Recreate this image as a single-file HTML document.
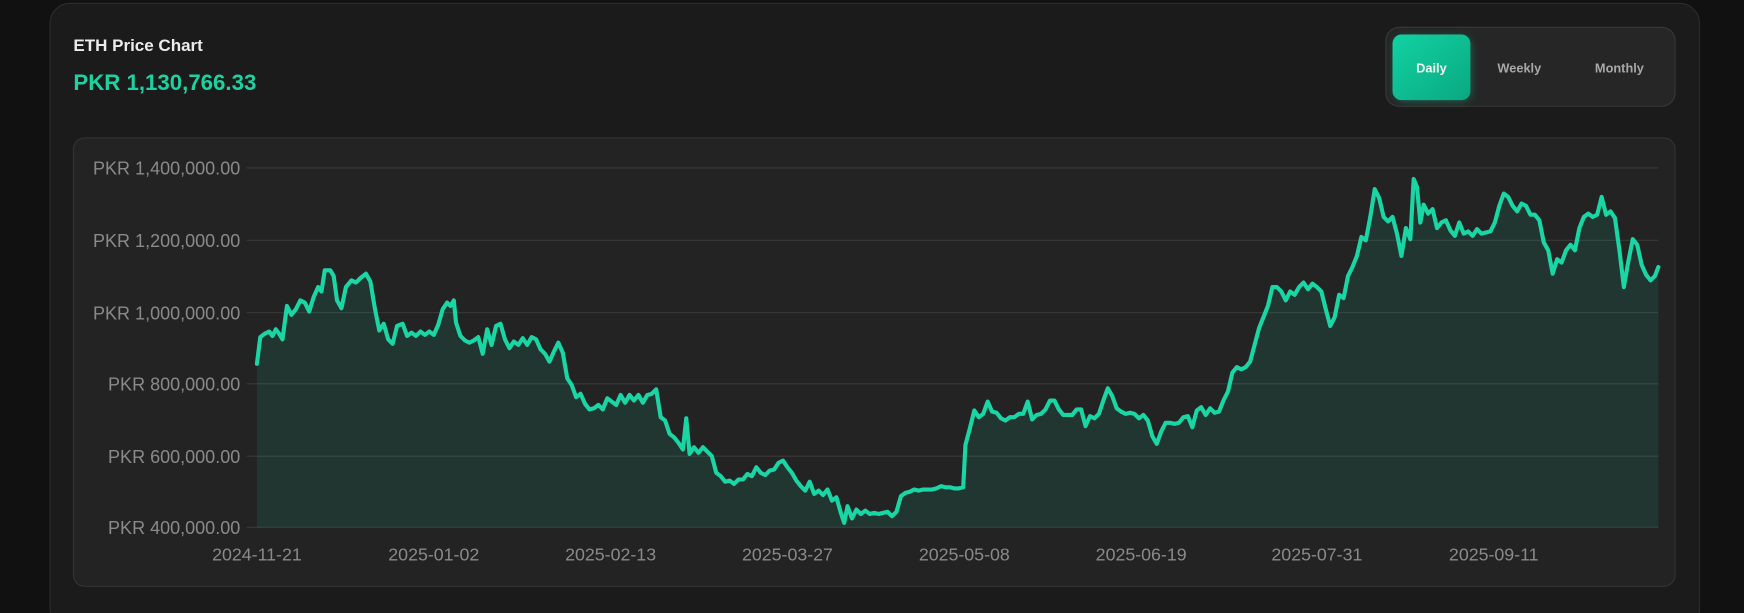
<!DOCTYPE html>
<html><head><meta charset="utf-8"><style>
html,body{margin:0;padding:0;background:#111;width:1744px;height:613px;overflow:hidden}
svg{display:block}
</style></head><body>
<svg width="1744" height="613" viewBox="0 0 1568 551" preserveAspectRatio="none" xmlns="http://www.w3.org/2000/svg">
<defs>
<linearGradient id="btn" x1="0" y1="0" x2="1" y2="1"><stop offset="0" stop-color="#12d2a2"/><stop offset="1" stop-color="#0aa881"/></linearGradient>
<filter id="glow" x="-30%" y="-30%" width="160%" height="160%"><feGaussianBlur stdDeviation="4"/></filter>
</defs>
<rect width="1568" height="551" fill="#111"/>
<rect x="45" y="3" width="1483" height="562" rx="18" fill="#1b1b1b" stroke="#2c2c2c" stroke-width="1"/>
<text x="66" y="46" font-family="Liberation Sans, sans-serif" font-weight="bold" font-size="15.3" fill="#ececec">ETH Price Chart</text>
<text x="66" y="81" font-family="Liberation Sans, sans-serif" font-weight="bold" font-size="20" fill="#1fd1a0">PKR 1,130,766.33</text>
<rect x="1246" y="24.5" width="260" height="71" rx="12" fill="#262626" stroke="#383838"/>
<rect x="1254" y="33" width="69" height="58" rx="9" fill="#12c99c" opacity="0.35" filter="url(#glow)"/>
<rect x="1252" y="31" width="70" height="59" rx="8" fill="url(#btn)"/>
<text x="1287" y="65" text-anchor="middle" font-family="Liberation Sans, sans-serif" font-weight="bold" font-size="11.5" fill="#f2f2f2">Daily</text>
<text x="1366" y="65" text-anchor="middle" font-family="Liberation Sans, sans-serif" font-weight="bold" font-size="11.5" fill="#a8a8a8">Weekly</text>
<text x="1456" y="65" text-anchor="middle" font-family="Liberation Sans, sans-serif" font-weight="bold" font-size="11.5" fill="#a8a8a8">Monthly</text>
<rect x="66" y="124" width="1440" height="403" rx="10" fill="#232323" stroke="#333"/>
<g stroke="#3a3a3a" stroke-width="1">
<line x1="222" y1="151" x2="1491" y2="151"/><line x1="222" y1="216" x2="1491" y2="216"/><line x1="222" y1="281" x2="1491" y2="281"/><line x1="222" y1="345" x2="1491" y2="345"/><line x1="222" y1="410" x2="1491" y2="410"/><line x1="222" y1="474" x2="1491" y2="474"/>
</g>
<g font-family="Liberation Sans, sans-serif" font-size="16.2" fill="#8a8a8a" text-anchor="end">
<text x="216" y="157">PKR 1,400,000.00</text><text x="216" y="222">PKR 1,200,000.00</text><text x="216" y="287">PKR 1,000,000.00</text><text x="216" y="351">PKR 800,000.00</text><text x="216" y="416">PKR 600,000.00</text><text x="216" y="480">PKR 400,000.00</text>
</g>
<g font-family="Liberation Sans, sans-serif" font-size="16" fill="#8a8a8a" text-anchor="middle">
<text x="231" y="504">2024-11-21</text><text x="390" y="504">2025-01-02</text><text x="549" y="504">2025-02-13</text><text x="708" y="504">2025-03-27</text><text x="867" y="504">2025-05-08</text><text x="1026" y="504">2025-06-19</text><text x="1184" y="504">2025-07-31</text><text x="1343" y="504">2025-09-11</text>
</g>
<path id="ln" fill="none" stroke="#1ad6a4" stroke-width="3.7" stroke-linejoin="round" stroke-linecap="round" d="M231,327 L234,303 238,300 242,298 245,302 248,296 251,300 254,305 258,275 262,283 266,278 270,270 274,272 278,280 282,267 286,258 289,262 292,243 297,243 300,248 303,270 307,277 311,258 316,252 320,254 324,250 329,246 333,253 337,277 341,297 345,291 349,305 353,309 357,293 362,291 366,302 370,299 374,302 378,298 382,301 386,298 390,301 394,292 398,278 402,272 405,275 408,270 410,290 414,302 418,306 422,308 426,306 430,303 434,318 438,296 442,310 446,293 450,291 454,305 458,313 462,307 466,310 470,304 474,310 478,303 482,305 486,314 490,318 494,325 498,316 502,308 506,317 510,340 514,346 518,357 522,354 526,363 530,368 534,367 538,364 542,368 546,358 550,361 554,364 558,355 562,362 566,355 570,360 574,355 578,362 582,355 586,354 590,350 594,375 598,378 602,390 606,393 610,398 614,404 617,376 620,408 624,402 628,407 632,402 636,406 640,410 644,425 648,428 652,433 656,432 660,435 664,431 668,431 672,426 676,428 680,420 684,425 688,427 692,423 696,422 700,416 704,414 708,420 712,425 716,432 720,437 724,441 728,433 732,444 736,441 740,445 744,440 748,450 752,447 756,461 759,470 762,455 766,466 770,458 774,462 778,459 782,462 786,461 790,462 794,461 798,460 802,464 806,460 810,446 814,443 818,442 822,440 826,441 830,440 834,440 838,440 842,439 846,437 850,438 854,438 858,439 862,439 866,438 868,400 872,385 876,369 880,375 884,372 888,361 892,370 896,371 900,376 904,378 908,375 912,375 916,372 920,372 924,361 928,377 932,373 936,372 940,368 944,360 948,360 952,368 956,373 960,373 964,373 968,368 972,368 976,383 980,374 984,376 988,372 992,360 996,349 1000,356 1004,367 1008,370 1012,372 1016,371 1020,372 1024,376 1028,373 1032,378 1036,392 1040,399 1044,388 1048,380 1052,380 1056,381 1060,380 1064,375 1068,374 1072,384 1076,369 1080,366 1084,373 1088,367 1092,371 1096,370 1100,360 1104,352 1108,335 1112,330 1116,332 1120,330 1124,325 1128,310 1132,295 1136,285 1140,275 1144,258 1148,258 1152,262 1156,270 1160,262 1164,265 1168,258 1172,254 1176,260 1180,255 1184,258 1188,262 1192,278 1196,293 1200,285 1204,265 1208,268 1212,248 1216,240 1220,230 1224,213 1228,216 1232,195 1236,170 1240,178 1244,195 1248,199 1252,195 1256,210 1260,230 1264,205 1268,215 1271,161 1274,168 1277,200 1280,184 1284,192 1288,188 1292,205 1296,200 1300,198 1304,207 1308,212 1312,200 1316,210 1320,208 1324,212 1328,206 1332,210 1336,209 1340,208 1344,200 1348,185 1352,174 1356,177 1360,185 1364,190 1368,183 1372,185 1376,193 1380,193 1384,198 1388,218 1392,225 1396,246 1400,233 1404,236 1408,225 1412,220 1416,225 1420,205 1424,195 1428,192 1432,195 1436,193 1440,177 1444,193 1448,190 1452,196 1456,225 1460,258 1464,235 1468,215 1472,220 1476,238 1480,247 1484,252 1488,248 1491,240"/>
</svg>
<script>
(function(){var p=document.getElementById('ln');var d=p.getAttribute('d');var a=document.createElementNS('http://www.w3.org/2000/svg','path');a.setAttribute('d',d+' L1491,474 L231,474 Z');a.setAttribute('fill','#1ad6a4');a.setAttribute('fill-opacity','0.11');p.parentNode.insertBefore(a,p);})();
</script>
</body></html>
